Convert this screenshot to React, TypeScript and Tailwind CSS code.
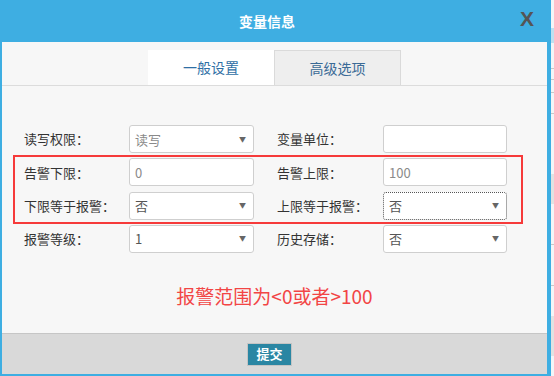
import React from "react";

const FONT = { fontFamily: '"Noto Sans CJK SC", "Noto Sans", sans-serif' };

function Field({
  value,
  select,
  valueClass,
  focus,
  width,
}: {
  value: string;
  select?: boolean;
  valueClass?: string;
  focus?: boolean;
  width: string;
}) {
  return (
    <div
      className={`${width} flex h-[28px] items-center justify-between rounded-[3px] bg-white pl-[5px] pr-[7px] ${
        focus ? "border border-dotted border-[#555]" : "border border-[#cfcfcf]"
      }`}
    >
      <span className={`text-[13px] leading-none ${valueClass ?? "text-[#555]"}`}>{value}</span>
      {select && <span className="text-[7px] leading-none text-[#666]">▼</span>}
    </div>
  );
}

function Row({
  l1,
  v1,
  s1,
  c1,
  l2,
  v2,
  s2,
  c2,
  f2,
}: {
  l1: string;
  v1: string;
  s1?: boolean;
  c1?: string;
  l2: string;
  v2: string;
  s2?: boolean;
  c2?: string;
  f2?: boolean;
}) {
  return (
    <div className="flex h-[28px] items-center pl-[22px]">
      <div className="w-[105px] text-[13px] text-[#333]">{l1}</div>
      <Field width="w-[125px]" value={v1} select={s1} valueClass={c1} />
      <div className="ml-[23px] w-[106px] text-[13px] text-[#333]">{l2}</div>
      <Field width="w-[124px]" value={v2} select={s2} valueClass={c2} focus={f2} />
    </div>
  );
}

export default function App() {
  return (
    <div className="flex h-[376px] w-[554px] overflow-hidden bg-white" style={FONT}>
      <div className="flex w-[551px] flex-col bg-[#3eaee2] pb-[2px] pl-[2px] pr-[4px]">
        <div className="relative flex h-[42px] items-center justify-center pr-[15px]">
          <span className="text-[14px] font-bold text-white">变量信息</span>
          <span
            className="absolute right-[13px] top-[8px] text-[21px] font-bold leading-none text-[#555]"
            style={{ fontFamily: '"Liberation Sans", Arial, sans-serif' }}
          >
            X
          </span>
        </div>
        <div className="flex flex-1 flex-col bg-[#f7f7f7]">
          <div className="flex h-[44px] items-end border-b border-[#dcdcdc] pl-[146px]">
            <div className="flex h-[35px] w-[126px] items-center justify-center bg-white text-[14px] text-[#2f6fa5]">
              一般设置
            </div>
            <div className="flex h-[35px] w-[127px] items-center justify-center border border-b-0 border-[#dadada] bg-[#eeeeee] text-[14px] text-[#3a6a96]">
              高级选项
            </div>
          </div>
          <div className="relative flex flex-col gap-[5.33px] pt-[39px]">
            <div className="absolute left-[11px] top-[69px] h-[69px] w-[510px] border-2 border-[#f63a3a]" />
            <Row l1="读写权限：" v1="读写" s1 c1="text-[#8a8a8a]" l2="变量单位：" v2="" />
            <Row l1="告警下限：" v1="0" c1="text-[#8a8a8a]" l2="告警上限：" v2="100" c2="text-[#8a8a8a]" />
            <Row l1="下限等于报警：" v1="否" s1 l2="上限等于报警：" v2="否" s2 f2 />
            <Row l1="报警等级：" v1="1" s1 l2="历史存储：" v2="否" s2 />
          </div>
          <div className="mt-[30px] flex justify-center">
            <span className="text-[19px] leading-[26px] text-[#f24545]">报警范围为&lt;0或者&gt;100</span>
          </div>
          <div className="flex-1" />
          <div className="flex h-[41px] items-center justify-center border-t border-[#c6c6c6] bg-[#d9d9d9] pr-[10px]">
            <button className="flex h-[23px] w-[45px] items-center justify-center border border-[#c4c4c4] bg-[#2a86a3] text-[13px] font-bold text-white">
              提交
            </button>
          </div>
        </div>
      </div>
      <div className="flex w-[3px] flex-col bg-[#f3f5f7]">
        <div className="h-[28px]" />
        <div className="h-[15px] bg-[#bfe0f0]" />
        <div className="mt-[25px] h-px bg-[#c8c8c8]" />
        <div className="mt-[10px] h-px bg-[#c8c8c8]" />
        <div className="mt-[12px] h-px bg-[#c8c8c8]" />
        <div className="mt-[20px] h-px bg-[#c8c8c8]" />
        <div className="mt-[60px] h-[30px] bg-[#e2e2e2]" />
        <div className="mt-[40px] h-px bg-[#c8c8c8]" />
        <div className="mt-[40px] h-px bg-[#c8c8c8]" />
        <div className="mt-[30px] h-[40px] bg-[#e2e2e2]" />
      </div>
    </div>
  );
}
